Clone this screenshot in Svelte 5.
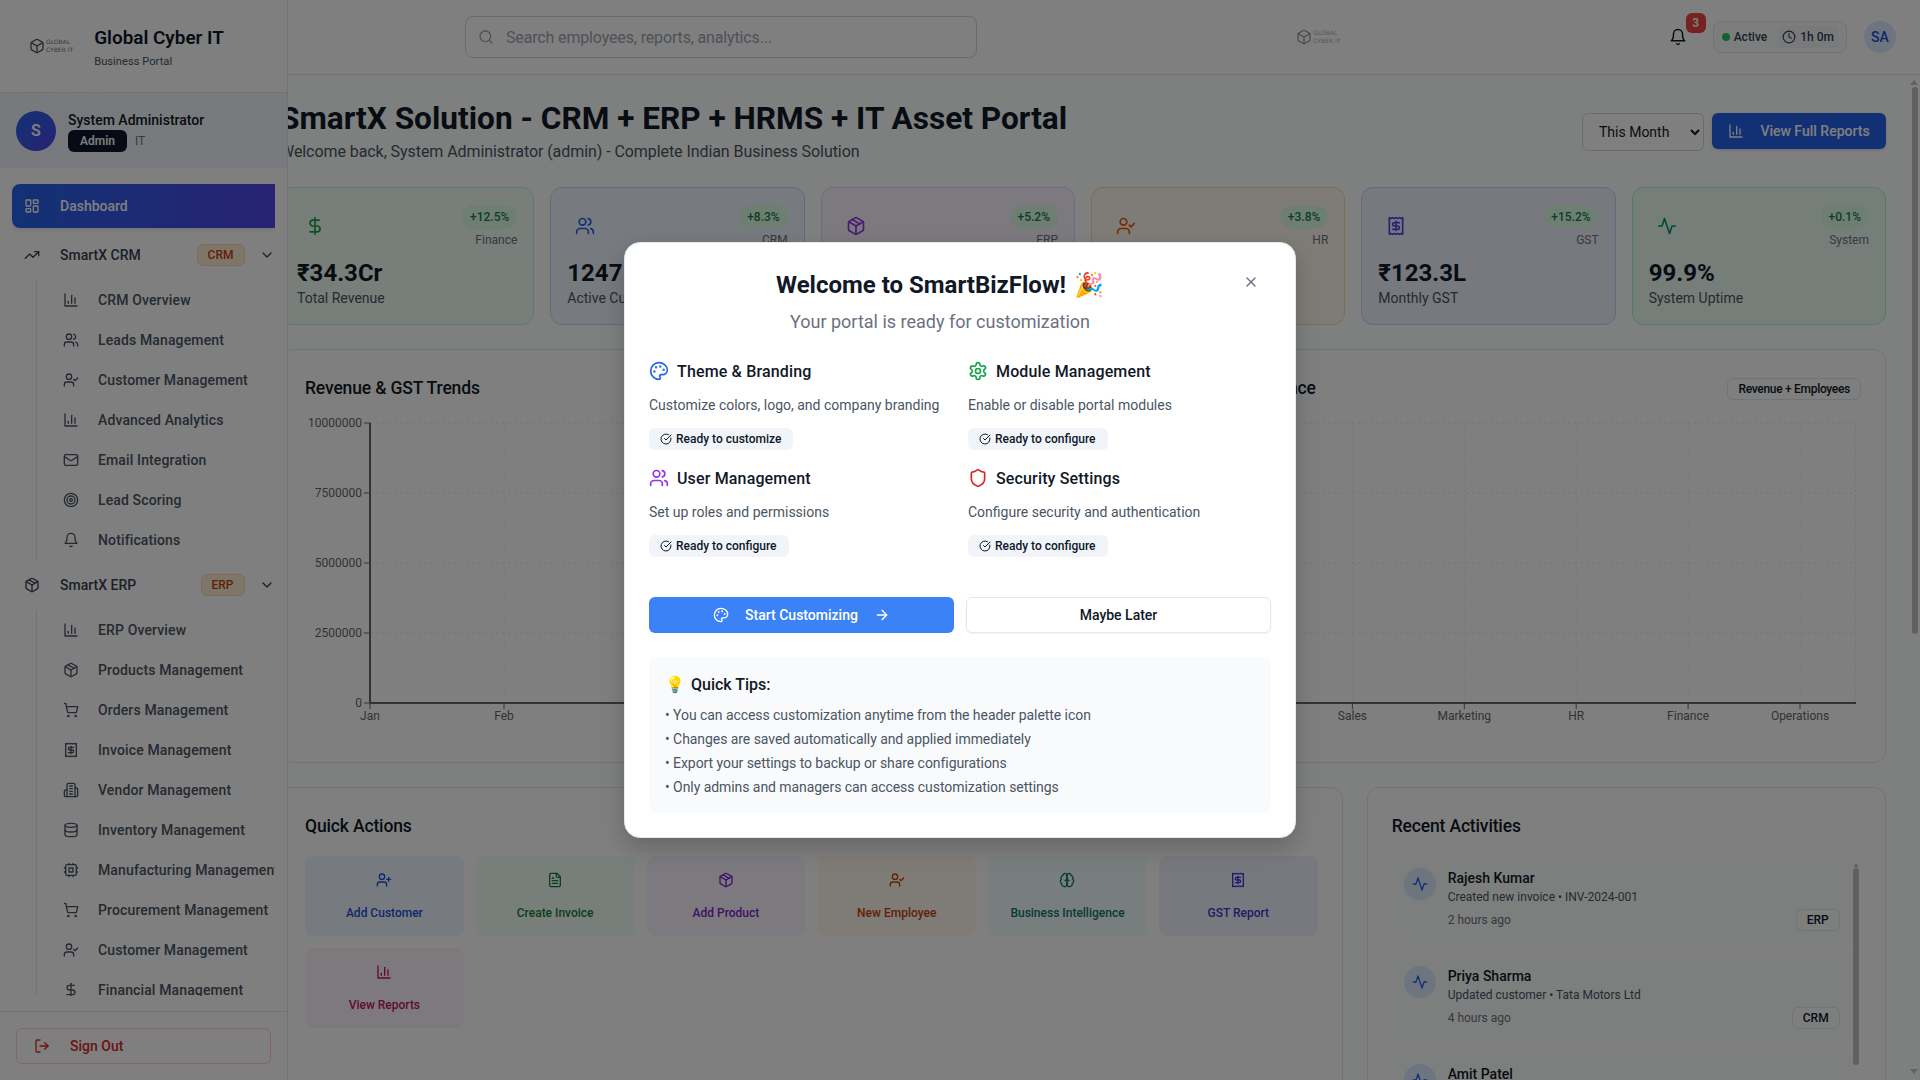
<script>
  const icons = {
    dashboard: '<rect x="3" y="3" width="7" height="9" rx="1"/><rect x="14" y="3" width="7" height="5" rx="1"/><rect x="14" y="12" width="7" height="9" rx="1"/><rect x="3" y="16" width="7" height="5" rx="1"/>',
    trending: '<polyline points="22 7 13.5 15.5 8.5 10.5 2 17"/><polyline points="16 7 22 7 22 13"/>',
    chevron: '<path d="m6 9 6 6 6-6"/>',
    chart: '<path d="M3 3v18h18"/><path d="M18 17V9"/><path d="M13 17V5"/><path d="M8 17v-3"/>',
    users: '<path d="M16 21v-2a4 4 0 0 0-4-4H6a4 4 0 0 0-4 4v2"/><circle cx="9" cy="7" r="4"/><path d="M22 21v-2a4 4 0 0 0-3-3.87"/><path d="M16 3.13a4 4 0 0 1 0 7.75"/>',
    userCheck: '<path d="M16 21v-2a4 4 0 0 0-4-4H6a4 4 0 0 0-4 4v2"/><circle cx="9" cy="7" r="4"/><polyline points="16 11 18 13 22 9"/>',
    userPlus: '<path d="M16 21v-2a4 4 0 0 0-4-4H6a4 4 0 0 0-4 4v2"/><circle cx="9" cy="7" r="4"/><path d="M19 8v6"/><path d="M22 11h-6"/>',
    mail: '<rect x="2" y="4" width="20" height="16" rx="2"/><path d="m22 7-8.97 5.7a1.94 1.94 0 0 1-2.06 0L2 7"/>',
    target: '<circle cx="12" cy="12" r="10"/><circle cx="12" cy="12" r="6"/><circle cx="12" cy="12" r="2"/>',
    bell: '<path d="M6 8a6 6 0 0 1 12 0c0 7 3 9 3 9H3s3-2 3-9"/><path d="M10.3 21a1.94 1.94 0 0 0 3.4 0"/>',
    box: '<path d="m7.5 4.27 9 5.15"/><path d="M21 8a2 2 0 0 0-1-1.73l-7-4a2 2 0 0 0-2 0l-7 4A2 2 0 0 0 3 8v8a2 2 0 0 0 1 1.73l7 4a2 2 0 0 0 2 0l7-4A2 2 0 0 0 21 16Z"/><path d="m3.3 7 8.7 5 8.7-5"/><path d="M12 22V12"/>',
    cart: '<circle cx="8" cy="21" r="1"/><circle cx="19" cy="21" r="1"/><path d="M2.05 2.05h2l2.66 12.42a2 2 0 0 0 2 1.58h9.78a2 2 0 0 0 1.95-1.57l1.65-7.43H5.12"/>',
    receipt: '<path d="M4 2v20l2-1 2 1 2-1 2 1 2-1 2 1 2-1 2 1V2l-2 1-2-1-2 1-2-1-2 1-2-1-2 1Z"/><path d="M16 8h-6a2 2 0 1 0 0 4h4a2 2 0 1 1 0 4H8"/><path d="M12 17.5v-11"/>',
    building: '<path d="M6 22V4a2 2 0 0 1 2-2h8a2 2 0 0 1 2 2v18Z"/><path d="M6 12H4a2 2 0 0 0-2 2v6a2 2 0 0 0 2 2h2"/><path d="M18 9h2a2 2 0 0 1 2 2v9a2 2 0 0 1-2 2h-2"/><path d="M10 6h4"/><path d="M10 10h4"/><path d="M10 14h4"/><path d="M10 18h4"/>',
    database: '<ellipse cx="12" cy="5" rx="9" ry="3"/><path d="M3 5V19A9 3 0 0 0 21 19V5"/><path d="M3 12A9 3 0 0 0 21 12"/>',
    cpu: '<rect x="4" y="4" width="16" height="16" rx="2"/><rect x="9" y="9" width="6" height="6"/><path d="M15 2v2M15 20v2M2 15h2M2 9h2M20 15h2M20 9h2M9 2v2M9 20v2"/>',
    dollar: '<line x1="12" y1="2" x2="12" y2="22"/><path d="M17 5H9.5a3.5 3.5 0 0 0 0 7h5a3.5 3.5 0 0 1 0 7H6"/>',
    logout: '<path d="M9 21H5a2 2 0 0 1-2-2V5a2 2 0 0 1 2-2h4"/><polyline points="16 17 21 12 16 7"/><line x1="21" y1="12" x2="9" y2="12"/>',
    search: '<circle cx="11" cy="11" r="8"/><path d="m21 21-4.3-4.3"/>',
    clock: '<circle cx="12" cy="12" r="10"/><polyline points="12 6 12 12 16 14"/>',
    activity: '<path d="M22 12h-4l-3 9L9 3l-3 9H2"/>',
    palette: '<circle cx="13.5" cy="6.5" r=".5" fill="currentColor"/><circle cx="17.5" cy="10.5" r=".5" fill="currentColor"/><circle cx="8.5" cy="7.5" r=".5" fill="currentColor"/><circle cx="6.5" cy="12.5" r=".5" fill="currentColor"/><path d="M12 2C6.5 2 2 6.5 2 12s4.5 10 10 10c.926 0 1.648-.746 1.648-1.688 0-.437-.18-.835-.437-1.125-.29-.289-.438-.652-.438-1.125a1.64 1.64 0 0 1 1.668-1.668h1.996c3.051 0 5.555-2.503 5.555-5.554C21.965 6.012 17.461 2 12 2z"/>',
    settings: '<path d="M12.22 2h-.44a2 2 0 0 0-2 2v.18a2 2 0 0 1-1 1.73l-.43.25a2 2 0 0 1-2 0l-.15-.08a2 2 0 0 0-2.73.73l-.22.38a2 2 0 0 0 .73 2.73l.15.1a2 2 0 0 1 1 1.72v.51a2 2 0 0 1-1 1.74l-.15.09a2 2 0 0 0-.73 2.73l.22.38a2 2 0 0 0 2.73.73l.15-.08a2 2 0 0 1 2 0l.43.25a2 2 0 0 1 1 1.73V20a2 2 0 0 0 2 2h.44a2 2 0 0 0 2-2v-.18a2 2 0 0 1 1-1.73l.43-.25a2 2 0 0 1 2 0l.15.08a2 2 0 0 0 2.73-.73l.22-.39a2 2 0 0 0-.73-2.73l-.15-.08a2 2 0 0 1-1-1.74v-.5a2 2 0 0 1 1-1.74l.15-.09a2 2 0 0 0 .73-2.73l-.22-.38a2 2 0 0 0-2.73-.73l-.15.08a2 2 0 0 1-2 0l-.43-.25a2 2 0 0 1-1-1.73V4a2 2 0 0 0-2-2z"/><circle cx="12" cy="12" r="3"/>',
    shield: '<path d="M20 13c0 5-3.5 7.5-7.66 8.95a1 1 0 0 1-.67-.01C7.5 20.5 4 18 4 13V6a1 1 0 0 1 1-1c2 0 4.5-1.2 6.24-2.72a1.17 1.17 0 0 1 1.52 0C14.51 3.81 17 5 19 5a1 1 0 0 1 1 1z"/>',
    check: '<path d="M21.801 10A10 10 0 1 1 17 3.335"/><path d="m9 11 3 3L22 4"/>',
    arrow: '<path d="M5 12h14"/><path d="m12 5 7 7-7 7"/>',
    x: '<path d="M18 6 6 18"/><path d="m6 6 12 12"/>',
    file: '<path d="M15 2H6a2 2 0 0 0-2 2v16a2 2 0 0 0 2 2h12a2 2 0 0 0 2-2V7Z"/><path d="M14 2v4a2 2 0 0 0 2 2h4"/><path d="M10 9H8"/><path d="M16 13H8"/><path d="M16 17H8"/>',
    brain: '<path d="M12 5a3 3 0 1 0-5.997.125 4 4 0 0 0-2.526 5.77 4 4 0 0 0 .556 6.588A4 4 0 1 0 12 18Z"/><path d="M12 5a3 3 0 1 1 5.997.125 4 4 0 0 1 2.526 5.77 4 4 0 0 1-.556 6.588A4 4 0 1 1 12 18Z"/><path d="M15 13a4.5 4.5 0 0 1-3-4 4.5 4.5 0 0 1-3 4"/>'
  };

  const cube = '<path d="M21 8a2 2 0 0 0-1-1.73l-7-4a2 2 0 0 0-2 0l-7 4A2 2 0 0 0 3 8v8a2 2 0 0 0 1 1.73l7 4a2 2 0 0 0 2 0l7-4A2 2 0 0 0 21 16Z"/><path d="m3.3 7 8.7 5 8.7-5"/><path d="M12 22V12"/>';

  const crmItems = [
    ['chart', 'CRM Overview'], ['users', 'Leads Management'], ['userCheck', 'Customer Management'],
    ['chart', 'Advanced Analytics'], ['mail', 'Email Integration'], ['target', 'Lead Scoring'], ['bell', 'Notifications']
  ];
  const erpItems = [
    ['chart', 'ERP Overview'], ['box', 'Products Management'], ['cart', 'Orders Management'],
    ['receipt', 'Invoice Management'], ['building', 'Vendor Management'], ['database', 'Inventory Management'],
    ['cpu', 'Manufacturing Management'], ['cart', 'Procurement Management'], ['userCheck', 'Customer Management'],
    ['dollar', 'Financial Management']
  ];

  const stats = [
    { tone: 'green', icon: 'dollar', change: '+12.5%', tag: 'Finance', value: '₹34.3Cr', label: 'Total Revenue' },
    { tone: 'blue', icon: 'users', change: '+8.3%', tag: 'CRM', value: '1247', label: 'Active Customers' },
    { tone: 'purple', icon: 'box', change: '+5.2%', tag: 'ERP', value: '3456', label: 'Products in Stock' },
    { tone: 'orange', icon: 'userCheck', change: '+3.8%', tag: 'HR', value: '156', label: 'Total Employees' },
    { tone: 'indigo', icon: 'receipt', change: '+15.2%', tag: 'GST', value: '₹123.3L', label: 'Monthly GST' },
    { tone: 'emerald', icon: 'activity', change: '+0.1%', tag: 'System', value: '99.9%', label: 'System Uptime' }
  ];

  const yTicks = [
    { y: 11, label: '10000000' }, { y: 81, label: '7500000' }, { y: 151, label: '5000000' },
    { y: 221, label: '2500000' }, { y: 291, label: '0' }
  ];
  const months = ['Jan', 'Feb', 'Mar', 'Apr', 'May', 'Jun'];
  const depts = ['IT', 'Sales', 'Marketing', 'HR', 'Finance', 'Operations'];

  const actions = [
    { tone: 'blue', icon: 'userPlus', label: 'Add Customer' },
    { tone: 'green', icon: 'file', label: 'Create Invoice' },
    { tone: 'purple', icon: 'box', label: 'Add Product' },
    { tone: 'orange', icon: 'userCheck', label: 'New Employee' },
    { tone: 'teal', icon: 'brain', label: 'Business Intelligence' },
    { tone: 'indigo', icon: 'receipt', label: 'GST Report' },
    { tone: 'pink', icon: 'chart', label: 'View Reports' }
  ];

  const activities = [
    { name: 'Rajesh Kumar', text: 'Created new invoice • INV-2024-001', time: '2 hours ago', tag: 'ERP' },
    { name: 'Priya Sharma', text: 'Updated customer • Tata Motors Ltd', time: '4 hours ago', tag: 'CRM' },
    { name: 'Amit Patel', text: 'Added new employee • Sneha Reddy', time: '6 hours ago', tag: 'HR' }
  ];

  const features = [
    { icon: 'palette', tone: 'c-blue', title: 'Theme & Branding', desc: 'Customize colors, logo, and company branding', status: 'Ready to customize' },
    { icon: 'settings', tone: 'c-green', title: 'Module Management', desc: 'Enable or disable portal modules', status: 'Ready to configure' },
    { icon: 'users', tone: 'c-purple', title: 'User Management', desc: 'Set up roles and permissions', status: 'Ready to configure' },
    { icon: 'shield', tone: 'c-red', title: 'Security Settings', desc: 'Configure security and authentication', status: 'Ready to configure' }
  ];

  const tips = [
    'You can access customization anytime from the header palette icon',
    'Changes are saved automatically and applied immediately',
    'Export your settings to backup or share configurations',
    'Only admins and managers can access customization settings'
  ];
</script>

{#snippet icon(name, size = 16)}
  <svg class="ico" width={size} height={size} viewBox="0 0 24 24" fill="none" stroke="currentColor" stroke-width="2" stroke-linecap="round" stroke-linejoin="round">{@html icons[name]}</svg>
{/snippet}

{#snippet logo()}
  <div class="logo">
    <svg width="16" height="18" viewBox="0 0 24 24" fill="none" stroke="currentColor" stroke-width="2" stroke-linejoin="round">{@html cube}</svg>
    <span class="logo-text">GLOBAL<br />CYBER IT</span>
  </div>
{/snippet}

{#snippet subList(items)}
  <div class="sub-list">
    {#each items as [ic, label]}
      <div class="sub-item">{@render icon(ic)}<span>{label}</span></div>
    {/each}
  </div>
{/snippet}

<div class="page">
  <aside class="sidebar">
    <div class="side-head">
      {@render logo()}
      <div class="brand">
        <div class="brand-title">Global Cyber IT</div>
        <div class="brand-sub">Business Portal</div>
      </div>
    </div>

    <div class="profile">
      <div class="avatar">S</div>
      <div>
        <div class="profile-name">System Administrator</div>
        <div class="profile-role"><span class="role-badge">Admin</span><span class="dept">IT</span></div>
      </div>
    </div>

    <nav class="nav">
      <div class="nav-active">{@render icon('dashboard')}<span>Dashboard</span></div>
      <div class="nav-group">
        {@render icon('trending')}<span class="group-label">SmartX CRM</span>
        <span class="group-badge">CRM</span>{@render icon('chevron')}
      </div>
      {@render subList(crmItems)}
      <div class="nav-group">
        {@render icon('box')}<span class="group-label">SmartX ERP</span>
        <span class="group-badge">ERP</span>{@render icon('chevron')}
      </div>
      {@render subList(erpItems)}
    </nav>

    <div class="side-foot">
      <div class="signout">{@render icon('logout')}<span>Sign Out</span></div>
    </div>
  </aside>

  <header class="topbar">
    <div class="search">{@render icon('search')}<span>Search employees, reports, analytics...</span></div>
    <div class="top-logo">{@render logo()}</div>
    <div class="top-right">
      <div class="bell">{@render icon('bell', 18)}<span class="bell-count">3</span></div>
      <div class="session">
        <span class="dot"></span><span>Active</span>
        <span class="timer">{@render icon('clock', 14)}1h 0m</span>
      </div>
      <div class="user-chip">SA</div>
    </div>
  </header>

  <main class="content">
    <div class="title-row">
      <div>
        <h1>SmartX Solution - CRM + ERP + HRMS + IT Asset Portal</h1>
        <p class="subtitle">Welcome back, System Administrator (admin) - Complete Indian Business Solution</p>
      </div>
      <div class="title-actions">
        <select class="period">
          <option>This Month</option>
          <option>This Quarter</option>
        </select>
        <div class="reports-btn">{@render icon('chart')}<span>View Full Reports</span></div>
      </div>
    </div>

    <div class="stats">
      {#each stats as s}
        <div class="stat {s.tone}">
          <div class="stat-top">
            <div class="stat-icon">{@render icon(s.icon, 20)}</div>
            <div class="stat-meta">
              <span class="stat-change">{s.change}</span>
              <span class="stat-tag">{s.tag}</span>
            </div>
          </div>
          <div class="stat-value">{s.value}</div>
          <div class="stat-label">{s.label}</div>
        </div>
      {/each}
    </div>

    <div class="charts">
      <section class="card">
        <div class="card-head"><h2>Revenue &amp; GST Trends</h2></div>
        <svg class="chart" width="741" height="325" viewBox="0 0 741 325">
          {#each yTicks as t}
            <line x1="65" x2="735" y1={t.y} y2={t.y} class="grid" />
            <line x1="59" x2="65" y1={t.y} y2={t.y} class="axis-thin" />
            <text x="57" y={t.y + 4} text-anchor="end" class="tick">{t.label}</text>
          {/each}
          {#each months as m, i}
            <line x1={65 + i * 134} x2={65 + i * 134} y1="11" y2="291" class="grid" />
            <line x1={65 + i * 134} x2={65 + i * 134} y1="291" y2="297" class="axis-thin" />
            <text x={65 + i * 134} y="308" text-anchor="middle" class="tick">{m}</text>
          {/each}
          <line x1="65" x2="65" y1="11" y2="291" class="axis" />
          <line x1="65" x2="735" y1="291" y2="291" class="axis" />
        </svg>
      </section>
      <section class="card">
        <div class="card-head">
          <h2>Department Performance</h2>
          <span class="outline-tag">Revenue + Employees</span>
        </div>
        <svg class="chart" width="741" height="325" viewBox="0 0 741 325">
          {#each yTicks as t}
            <line x1="64" x2="736" y1={t.y} y2={t.y} class="grid" />
          {/each}
          {#each depts as d, i}
            <line x1={120.5 + i * 111.9} x2={120.5 + i * 111.9} y1="11" y2="291" class="grid" />
            <line x1={120.5 + i * 111.9} x2={120.5 + i * 111.9} y1="291" y2="297" class="axis-thin" />
            <text x={120.5 + i * 111.9} y="308" text-anchor="middle" class="tick">{d}</text>
          {/each}
          <line x1="735.5" x2="735.5" y1="11" y2="291" class="grid" />
          <line x1="64" x2="736" y1="291" y2="291" class="axis" />
        </svg>
      </section>
    </div>

    <div class="lower">
      <section class="card quick">
        <h2>Quick Actions</h2>
        <div class="action-grid">
          {#each actions as a}
            <div class="action {a.tone}">
              {@render icon(a.icon)}
              <span>{a.label}</span>
            </div>
          {/each}
        </div>
      </section>
      <section class="card recent">
        <h2>Recent Activities</h2>
        <div class="activity-list">
          {#each activities as a}
            <div class="activity">
              <div class="activity-icon">{@render icon('activity')}</div>
              <div class="activity-body">
                <div class="activity-name">{a.name}</div>
                <div class="activity-text">{a.text}</div>
                <div class="activity-foot">
                  <span>{a.time}</span>
                  <span class="outline-tag">{a.tag}</span>
                </div>
              </div>
            </div>
          {/each}
        </div>
        <div class="list-scroll-up"></div>
        <div class="list-scroll"></div>
      </section>
    </div>
  </main>

  <div class="page-scroll-up"></div>
  <div class="page-scroll"></div>
  <div class="page-scroll-down"></div>

  <div class="scrim">
    <div class="modal">
      <div class="close">{@render icon('x')}</div>
      <div class="modal-head">
        <h3 class="modal-title">Welcome to SmartBizFlow! <span class="party">🎉</span></h3>
        <p class="modal-sub">Your portal is ready for customization</p>
      </div>

      <div class="features">
        {#each features as f}
          <div>
            <div class="feature-title {f.tone}">{@render icon(f.icon, 20)}<span>{f.title}</span></div>
            <p class="feature-desc">{f.desc}</p>
            <span class="feature-status">{@render icon('check', 12)}{f.status}</span>
          </div>
        {/each}
      </div>

      <div class="modal-actions">
        <div class="btn-primary">{@render icon('palette')}<span>Start Customizing</span>{@render icon('arrow')}</div>
        <div class="btn-outline">Maybe Later</div>
      </div>

      <div class="tips">
        <div class="tips-title"><span class="bulb">💡</span> Quick Tips:</div>
        {#each tips as t}
          <div class="tip">• {t}</div>
        {/each}
      </div>
    </div>
  </div>
</div>

<style>
  :global(body) {
    margin: 0;
    background: #fff;
    overflow: hidden;
  }

  .page {
    position: relative;
    height: 100vh;
    padding-left: 256px;
    overflow: hidden;
    box-sizing: border-box;
    font-family: Roboto, "Liberation Sans", sans-serif;
    color: #0f172a;
    background: #fdfefe;
  }

  .ico {
    flex: none;
    display: block;
  }

  /* sidebar */
  .sidebar {
    position: absolute;
    left: 0;
    top: 0;
    bottom: 0;
    z-index: 10;
    width: 288px;
    display: flex;
    flex-direction: column;
    background: #fff;
    border-right: 1px solid #e5e7eb;
    box-sizing: border-box;
  }

  .side-head {
    height: 93px;
    box-sizing: border-box;
    display: flex;
    align-items: center;
    gap: 21px;
    padding: 0 0 0 29px;
    border-bottom: 1px solid #e5e7eb;
  }

  .logo {
    display: flex;
    align-items: center;
    gap: 1px;
    color: #4b5563;
  }

  .logo-text {
    font-family: "DejaVu Sans", sans-serif;
    font-size: 6px;
    line-height: 8px;
    color: #6b7280;
  }

  .brand {
    padding-top: 1px;
  }

  .brand-title {
    font-size: 18.9px;
    line-height: 28px;
    font-weight: 600;
  }

  .brand-sub {
    font-size: 11.2px;
    line-height: 16px;
    margin-top: 2px;
    color: #4b5563;
  }

  .profile {
    height: 75px;
    display: flex;
    align-items: center;
    gap: 12px;
    padding: 0 16px;
    background: linear-gradient(90deg, #eff3fa, #f3f5fb);
  }

  .avatar {
    width: 40px;
    height: 40px;
    border-radius: 50%;
    display: flex;
    align-items: center;
    justify-content: center;
    color: #fff;
    font-weight: 600;
    font-size: 16px;
    background: linear-gradient(135deg, #2563eb, #4f46e5);
  }

  .profile-name {
    font-size: 14px;
    line-height: 20px;
    font-weight: 500;
    color: #111827;
  }

  .profile-role {
    display: flex;
    align-items: center;
    gap: 8px;
  }

  .role-badge {
    height: 22px;
    padding: 0 12px;
    display: flex;
    align-items: center;
    border-radius: 6px;
    background: #0f172a;
    color: #f8fafc;
    font-size: 12px;
    font-weight: 600;
  }

  .dept {
    font-size: 12px;
    color: #6b7280;
  }

  .nav {
    flex: 1;
    min-height: 0;
    margin: 16px 12px 15px 12px;
    overflow: hidden;
  }

  .nav-active {
    height: 44px;
    display: flex;
    align-items: center;
    gap: 20px;
    padding-left: 12px;
    border-radius: 8px 0 0 8px;
    background: linear-gradient(90deg, #2563eb, #4f46e5);
    color: #fff;
    font-size: 14px;
    font-weight: 500;
    box-shadow: 0 2px 4px rgba(0, 0, 0, 0.1);
  }

  .nav-group {
    height: 44px;
    margin-top: 5px;
    display: flex;
    align-items: center;
    gap: 20px;
    padding-left: 12px;
    font-size: 14px;
    font-weight: 500;
    color: #374151;
  }

  .nav-group + .sub-list {
    margin-top: 3px;
  }

  .sub-list + .nav-group {
    margin-top: 3px;
  }

  .group-label {
    flex: 1;
  }

  .group-badge {
    height: 22px;
    padding: 0 10px;
    margin-right: -5.5px;
    display: flex;
    align-items: center;
    box-sizing: border-box;
    border: 1px solid #fed7aa;
    border-radius: 6px;
    background: #ffedd5;
    color: #c2410c;
    font-size: 12px;
    font-weight: 500;
  }

  .sub-list {
    margin-left: 24px;
    border-left: 1px solid #e5e7eb;
  }

  .sub-item {
    height: 40px;
    display: flex;
    align-items: center;
    gap: 19px;
    padding-left: 26px;
    font-size: 14px;
    font-weight: 500;
    letter-spacing: 0.13px;
    color: #4b5563;
    white-space: nowrap;
  }

  .side-foot {
    padding: 16px;
    border-top: 1px solid #e5e7eb;
    height: 69px;
    box-sizing: border-box;
  }

  .signout {
    height: 36px;
    display: flex;
    align-items: center;
    gap: 20px;
    padding-left: 17px;
    box-sizing: border-box;
    border: 1px solid #fecaca;
    border-radius: 6px;
    color: #dc2626;
    font-size: 14px;
    font-weight: 500;
  }

  /* header */
  .topbar {
    height: 75px;
    box-sizing: border-box;
    display: flex;
    align-items: center;
    padding: 0 24px 0 209px;
    border-bottom: 1px solid #e5e7eb;
    background: #fff;
  }

  .search {
    width: 512px;
    height: 42px;
    box-sizing: border-box;
    display: flex;
    align-items: center;
    gap: 12px;
    padding-left: 12px;
    border: 1px solid #d1d5db;
    border-radius: 8px;
    color: #9ca3af;
    font-size: 16px;
    letter-spacing: -0.15px;
    background: #fff;
  }

  .top-logo {
    flex: 1;
    display: flex;
    justify-content: center;
    opacity: 0.6;
  }

  .top-right {
    display: flex;
    align-items: center;
    gap: 17px;
  }

  .bell {
    position: relative;
    width: 36px;
    height: 32px;
    display: flex;
    align-items: center;
    justify-content: center;
    color: #111827;
  }

  .bell-count {
    position: absolute;
    left: 26px;
    top: -8px;
    width: 20px;
    height: 20px;
    display: flex;
    align-items: center;
    justify-content: center;
    border-radius: 6px;
    background: #ef4444;
    color: #fff;
    font-size: 12px;
    font-weight: 600;
  }

  .session {
    height: 32px;
    box-sizing: border-box;
    display: flex;
    align-items: center;
    padding: 0 8px;
    gap: 4px;
    border: 1px solid #e5e7eb;
    border-radius: 8px;
    background: #f9fafb;
    font-size: 12px;
    font-weight: 500;
    color: #374151;
  }

  .dot {
    width: 8px;
    height: 8px;
    border-radius: 50%;
    background: #22c55e;
  }

  .timer {
    display: flex;
    align-items: center;
    gap: 4px;
    margin-left: 7px;
    padding: 4px;
    border-radius: 4px;
    background: #f3f4f6;
  }

  .user-chip {
    width: 32px;
    height: 32px;
    border-radius: 50%;
    display: flex;
    align-items: center;
    justify-content: center;
    background: #dbeafe;
    color: #1d4ed8;
    font-size: 14px;
    font-weight: 500;
  }

  /* content */
  .content {
    padding: 24px 34px 0 24px;
  }

  .title-row {
    display: flex;
    justify-content: space-between;
    align-items: center;
  }

  h1 {
    margin: 2px 0 0;
    font-size: 31.6px;
    line-height: 36px;
    font-weight: 700;
    color: #111827;
    white-space: nowrap;
  }

  .subtitle {
    margin: 3px 0 0;
    font-size: 16px;
    line-height: 24px;
    letter-spacing: -0.07px;
    color: #4b5563;
  }

  .title-actions {
    display: flex;
    align-items: flex-start;
    gap: 8px;
  }

  .period {
    width: 122px;
    height: 38px;
    padding: 0 8px 0 12px;
    border: 1px solid #d1d5db;
    border-radius: 6px;
    background: #fff;
    color: #111827;
    font-family: inherit;
    font-size: 14px;
  }

  .reports-btn {
    width: 174px;
    height: 36px;
    box-sizing: border-box;
    display: flex;
    align-items: center;
    justify-content: center;
    gap: 16px;
    border-radius: 6px;
    background: #2563eb;
    color: #fff;
    font-size: 14px;
    font-weight: 500;
    box-shadow: 0 1px 3px rgba(0, 0, 0, 0.15);
  }

  .stats {
    display: grid;
    grid-template-columns: repeat(6, 1fr);
    gap: 16px;
    margin-top: 23px;
  }

  .stat {
    height: 138px;
    box-sizing: border-box;
    padding: 16px;
    border: 1px solid;
    border-radius: 12px;
  }

  .stat-top {
    display: flex;
    justify-content: space-between;
    align-items: center;
    margin-bottom: 8px;
  }

  .stat-icon {
    padding: 8px;
  }

  .stat-meta {
    display: flex;
    flex-direction: column;
    align-items: flex-end;
    gap: 3px;
    padding-top: 1px;
  }

  .stat-change {
    height: 24px;
    padding: 0 8px;
    display: flex;
    align-items: center;
    border-radius: 12px;
    background: #dcfce7;
    color: #15803d;
    font-size: 12px;
    font-weight: 500;
  }

  .stat-tag {
    font-size: 12px;
    line-height: 16px;
    color: #6b7280;
  }

  .stat-value {
    padding-top: 2px;
    font-size: 24px;
    line-height: 30px;
    font-weight: 700;
    color: #111827;
  }

  .stat-label {
    font-size: 14px;
    line-height: 20px;
    color: #4b5563;
  }

  .stat.green { background: #f0fdf4; border-color: #bbf7d0; }
  .stat.green .stat-icon { color: #16a34a; }
  .stat.blue { background: #eff6ff; border-color: #bfdbfe; }
  .stat.blue .stat-icon { color: #2563eb; }
  .stat.purple { background: #faf5ff; border-color: #e9d5ff; }
  .stat.purple .stat-icon { color: #9333ea; }
  .stat.orange { background: #fff7ed; border-color: #fed7aa; }
  .stat.orange .stat-icon { color: #ea580c; }
  .stat.indigo { background: #eef2ff; border-color: #c7d2fe; }
  .stat.indigo .stat-icon { color: #4f46e5; }
  .stat.emerald { background: #ecfdf5; border-color: #a7f3d0; }
  .stat.emerald .stat-icon { color: #059669; }

  .card {
    border: 1px solid #e5e7eb;
    border-radius: 12px;
    padding: 24px;
    background: #fff;
  }

  .charts {
    display: grid;
    grid-template-columns: 1fr 1fr;
    gap: 24px;
    margin-top: 24px;
  }

  .charts .card {
    height: 414px;
    box-sizing: border-box;
  }

  .card-head {
    display: flex;
    justify-content: space-between;
    align-items: center;
    height: 28px;
    margin-bottom: 10px;
  }

  h2 {
    margin: 0;
    padding-top: 1px;
    font-size: 17.5px;
    line-height: 27px;
    font-weight: 500;
    letter-spacing: -0.15px;
    color: #111827;
  }

  .outline-tag {
    height: 22px;
    box-sizing: border-box;
    display: inline-flex;
    align-items: center;
    padding: 0 10px;
    border: 1px solid #e5e7eb;
    border-radius: 6px;
    font-size: 12px;
    font-weight: 500;
    color: #111827;
  }

  .card-head .outline-tag {
    margin-top: 1px;
    letter-spacing: -0.3px;
  }

  .chart {
    display: block;
  }

  .grid {
    stroke: #ccc;
    stroke-dasharray: 3 3;
    opacity: 0.35;
  }

  .axis {
    stroke: #666;
    stroke-width: 2;
  }

  .axis-thin {
    stroke: #666;
  }

  .tick {
    font-size: 12px;
    fill: #666;
  }

  .lower {
    display: grid;
    grid-template-columns: repeat(3, 1fr);
    gap: 24px;
    margin-top: 24px;
  }

  .quick {
    grid-column: span 2;
  }

  .recent {
    position: relative;
    height: 400px;
  }

  .action-grid {
    display: grid;
    grid-template-columns: repeat(6, 1fr);
    gap: 12px;
    margin-top: 16px;
  }

  .action {
    height: 80px;
    box-sizing: border-box;
    padding-top: 16px;
    display: flex;
    flex-direction: column;
    align-items: center;
    gap: 17px;
    border-radius: 8px;
    font-size: 12px;
    line-height: 16px;
    font-weight: 500;
  }

  .action.blue { background: #eff6ff; color: #1d4ed8; }
  .action.green { background: #f0fdf4; color: #15803d; }
  .action.purple { background: #faf5ff; color: #7e22ce; }
  .action.orange { background: #fff7ed; color: #c2410c; }
  .action.teal { background: #f0fdfa; color: #0f766e; }
  .action.indigo { background: #eef2ff; color: #4338ca; }
  .action.pink { background: #fdf2f8; color: #be185d; }

  .activity-list {
    margin-top: 16px;
    width: 460px;
    display: flex;
    flex-direction: column;
    gap: 13px;
  }

  .activity {
    height: 85px;
    box-sizing: border-box;
    display: flex;
    gap: 12px;
    padding: 12px;
    border-radius: 8px;
    background: #fbfcfc;
  }

  .activity-icon {
    width: 32px;
    height: 32px;
    border-radius: 50%;
    display: flex;
    align-items: center;
    justify-content: center;
    flex: none;
    background: #dbeafe;
    color: #2563eb;
  }

  .activity-body {
    flex: 1;
  }

  .activity-name {
    font-size: 14px;
    line-height: 20px;
    font-weight: 500;
    color: #111827;
  }

  .activity-text {
    margin-top: 1px;
    font-size: 12px;
    line-height: 16px;
    color: #4b5563;
  }

  .activity-foot {
    display: flex;
    justify-content: space-between;
    align-items: center;
    margin-top: 4px;
    font-size: 12px;
    color: #6b7280;
  }

  .list-scroll-up {
    position: absolute;
    left: 485px;
    top: 72px;
    border: 3px solid transparent;
    border-bottom: 4px solid #c4c4c4;
  }

  .list-scroll {
    position: absolute;
    left: 485px;
    top: 80px;
    width: 6px;
    height: 197px;
    border-radius: 3px;
    background: #c1c1c1;
  }

  .page-scroll-up {
    position: absolute;
    right: 2px;
    top: 76px;
    border: 4px solid transparent;
    border-bottom: 5px solid #c4c4c4;
  }

  .page-scroll {
    position: absolute;
    right: 2px;
    top: 87px;
    width: 6px;
    height: 547px;
    border-radius: 3px;
    background: #c1c1c1;
  }

  .page-scroll-down {
    position: absolute;
    right: 2px;
    bottom: 2px;
    border: 4px solid transparent;
    border-top: 5px solid #c4c4c4;
  }

  /* welcome dialog */
  .scrim {
    position: absolute;
    inset: 0;
    z-index: 50;
    display: flex;
    align-items: center;
    justify-content: center;
    background: rgba(0, 0, 0, 0.5);
  }

  .modal {
    position: relative;
    width: 672px;
    box-sizing: border-box;
    padding: 24px;
    border: 1px solid #e5e7eb;
    border-radius: 16px;
    background: #fff;
    box-shadow: 0 10px 25px rgba(0, 0, 0, 0.2);
  }

  .close {
    position: absolute;
    right: 36px;
    top: 31px;
    color: #6b7280;
  }

  .modal-head {
    padding-right: 40px;
    text-align: center;
  }

  .modal-title {
    margin: 0;
    font-size: 24px;
    line-height: 36px;
    font-weight: 700;
    color: #111827;
  }

  .party {
    margin-left: 2px;
  }

  .modal-sub {
    margin: 5px 0 0;
    font-size: 18px;
    line-height: 28px;
    color: #6b7280;
  }

  .features {
    margin-top: 23px;
    display: grid;
    grid-template-columns: 1fr 1fr;
    column-gap: 16px;
    row-gap: 16px;
  }

  .feature-title {
    display: flex;
    align-items: center;
    gap: 8px;
    height: 24px;
    font-size: 16px;
    font-weight: 500;
    letter-spacing: 0.15px;
  }

  .feature-title span {
    color: #111827;
  }

  .c-blue { color: #2563eb; }
  .c-green { color: #16a34a; }
  .c-purple { color: #9333ea; }
  .c-red { color: #dc2626; }

  .feature-desc {
    margin: 12px 0 13px;
    font-size: 14px;
    line-height: 20px;
    color: #4b5563;
  }

  .feature-status {
    height: 22px;
    box-sizing: border-box;
    display: inline-flex;
    align-items: center;
    gap: 4px;
    padding: 0 12px 0 11px;
    border-radius: 6px;
    background: #f1f5f9;
    color: #0f172a;
    font-size: 12px;
    font-weight: 500;
  }

  .modal-actions {
    display: grid;
    grid-template-columns: 1fr 1fr;
    gap: 12px;
    margin-top: 40px;
  }

  .btn-primary,
  .btn-outline {
    height: 36px;
    box-sizing: border-box;
    display: flex;
    align-items: center;
    justify-content: center;
    border-radius: 6px;
    font-size: 14px;
    font-weight: 500;
  }

  .btn-primary {
    gap: 16px;
    background: #3b82f6;
    color: #fff;
  }

  .btn-outline {
    border: 1px solid #e5e7eb;
    color: #111827;
    box-shadow: 0 1px 2px rgba(0, 0, 0, 0.05);
  }

  .tips {
    margin-top: 24px;
    padding: 16px;
    border-radius: 8px;
    background: #f9fafb;
  }

  .tips-title {
    font-size: 16px;
    line-height: 24px;
    font-weight: 500;
    color: #111827;
    margin-bottom: 8px;
  }

  .bulb {
    margin-right: 2px;
  }

  .tip {
    font-size: 14px;
    line-height: 20px;
    letter-spacing: -0.06px;
    color: #4b5563;
  }

  .tip + .tip {
    margin-top: 4px;
  }
</style>
